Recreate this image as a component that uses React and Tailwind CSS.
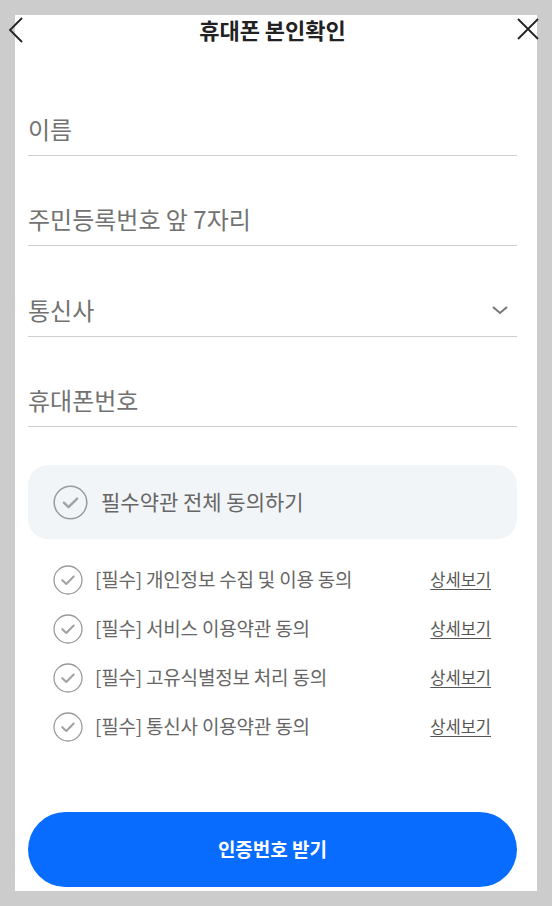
import React from "react";

const terms = [
  "[필수] 개인정보 수집 및 이용 동의",
  "[필수] 서비스 이용약관 동의",
  "[필수] 고유식별정보 처리 동의",
  "[필수] 통신사 이용약관 동의",
];

const fields = ["이름", "주민등록번호 앞 7자리", "통신사", "휴대폰번호"];

function CheckCircle({ size }) {
  return (
    <svg width={size} height={size} viewBox="0 0 30 30" className="shrink-0">
      <circle cx="15" cy="15" r="14" fill="none" stroke="#9a9a9a" strokeWidth="1.3" />
      <path d="M9.3 15.2 L13.3 19 L20.7 11.6" fill="none" stroke="#a3a3a3" strokeWidth="2.1" strokeLinecap="round" strokeLinejoin="round" />
    </svg>
  );
}

export default function App() {
  return (
    <div
      className="min-h-screen bg-[#cccccc] px-[15px] py-[15px]"
      style={{ fontFamily: '"Noto Sans CJK KR", "Noto Sans", sans-serif' }}
    >
      <div className="relative bg-white pl-[13px] pr-[20px] pb-[4px]">
        {/* back / close */}
        <svg width="16" height="28" viewBox="0 0 16 28" className="absolute left-[-7px] top-[1px]">
          <path d="M14 2 L2 14 L14 26" fill="none" stroke="#222" strokeWidth="1.8" />
        </svg>
        <svg width="24" height="24" viewBox="0 0 24 24" className="absolute right-[-3px] top-[2px]">
          <path d="M2 2 L22 22 M22 2 L2 22" fill="none" stroke="#222" strokeWidth="1.8" />
        </svg>

        {/* Header */}
        <div className="h-[28px] flex items-center justify-center">
          <h1 className="text-[22px] font-bold leading-[28px] text-[#222]">휴대폰 본인확인</h1>
        </div>

        {/* Inputs */}
        <div className="pt-[23px]">
          {fields.map((f, i) => (
            <div key={f} className={`${i === 2 ? "h-[91px]" : "h-[90px]"} flex items-end border-b border-[#cfcfcf]`}>
              <div className="w-full flex items-center justify-between pb-[9px]">
                <span className="text-[24px] leading-[34px] text-[#727272]">{f}</span>
                {i === 2 && (
                  <svg width="18" height="10" viewBox="0 0 18 10" className="mr-[8px]">
                    <path d="M2 2 L9 8 L16 2" fill="none" stroke="#777" strokeWidth="2" />
                  </svg>
                )}
              </div>
            </div>
          ))}
        </div>

        {/* Agree all */}
        <div className="mt-[38px] h-[74px] rounded-[20px] bg-[#f2f5f8] flex items-center pl-[25px] gap-[13px]">
          <CheckCircle size={35} />
          <span className="text-[21px] text-[#666]">필수약관 전체 동의하기</span>
        </div>

        {/* Terms */}
        <div className="mt-[16px]">
          {terms.map((t) => (
            <div key={t} className="h-[49px] flex items-center pl-[25px] pr-[26px]">
              <CheckCircle size={30} />
              <span className="ml-[12px] flex-1 text-[19px] text-[#666] tracking-[-0.2px]">{t}</span>
              <a className="text-[16.5px] text-[#555] underline underline-offset-[3px]">상세보기</a>
            </div>
          ))}
        </div>

        {/* Button */}
        <button className="mt-[61px] w-full h-[75px] rounded-full bg-[#076cff] text-white text-[19px] font-bold">
          인증번호 받기
        </button>
      </div>
    </div>
  );
}
